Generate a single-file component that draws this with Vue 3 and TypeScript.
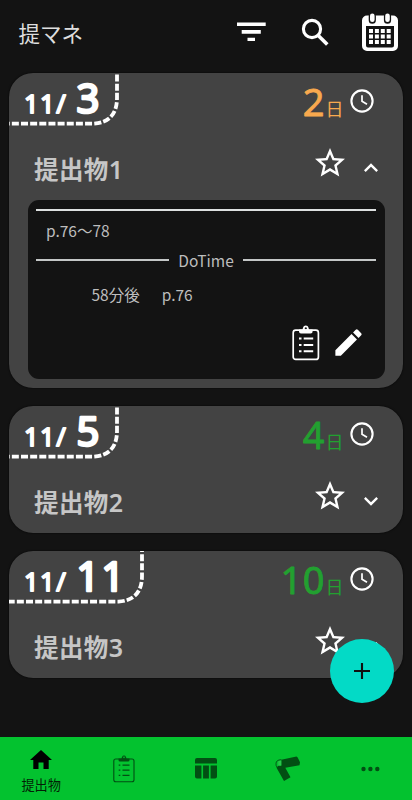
<script setup lang="ts">
interface Task {
  id: number
  month: string
  day: string
  title: string
  left: string
  urgent: boolean
  open: boolean
}

const tasks: Task[] = [
  { id: 1, month: '11/', day: '3', title: '提出物', left: '2', urgent: true, open: true },
  { id: 2, month: '11/', day: '5', title: '提出物', left: '4', urgent: false, open: false },
  { id: 3, month: '11/', day: '11', title: '提出物', left: '10', urgent: false, open: false },
]
</script>

<template>
  <div class="screen">
    <header class="bar">
      <h1>提マネ</h1>
      <svg class="filter" viewBox="0 0 29 20"><path d="M0 .6h28.7v3.500H0zM4.700 8.100h19.100v3.600H4.700zM10.500 15.800H18v3.300h-7.500z" /></svg>
      <svg class="search" viewBox="0 0 28 28">
        <circle cx="11" cy="11" r="8.600" fill="none" stroke="#fff" stroke-width="3.100" />
        <path d="M17 17.300L26.300 26.500" stroke="#fff" stroke-width="3.600" />
      </svg>
      <svg class="calendar" viewBox="0 0 36 38">
        <path fill-rule="evenodd" d="M5 2.500h26a5 5 0 0 1 5 5V33a5 5 0 0 1-5 5H5a5 5 0 0 1-5-5V7.500a5 5 0 0 1 5-5zM4 13v19.500a2 2 0 0 0 2 2h24a2 2 0 0 0 2-2V13z" />
        <path d="M10.300 3.200v4M25.500 3.200v4" stroke="#131313" stroke-width="7.200" stroke-linecap="round" />
        <path d="M10.300 2.800v4M25.500 2.800v4" stroke="#fff" stroke-width="4.600" stroke-linecap="round" />
        <path d="M7 16h4v4H7zM12.900 16h4v4h-4zM18.800 16h4v4h-4zM24.700 16h4v4h-4zM7 21.500h4v4H7zM12.900 21.500h4v4h-4zM18.800 21.500h4v4h-4zM24.700 21.500h4v4h-4zM7 27h4v4H7zM12.900 27h4v4h-4zM18.800 27h4v4h-4zM24.700 27h4v4h-4z" />
      </svg>
    </header>

    <main class="list">
      <article v-for="t in tasks" :key="t.id" class="card" :class="{ opened: t.open }">
        <div class="top">
          <svg class="date" viewBox="0 0 140 54">
            <path v-if="t.day.length > 1" d="M0 50.700H109.500Q133 49 133 25V0" stroke-dashoffset="1.300" />
            <path v-else d="M0 50.700H84.500Q108 49 108 25V0" stroke-dashoffset="6.300" />
            <text class="month" x="15" y="40">{{ t.month }}</text>
            <text class="day" x="67.500" y="40">{{ t.day }}</text>
          </svg>
          <div class="left" :class="{ urgent: t.urgent }">
            <svg class="num" viewBox="0 0 60 54"><text x="59.300" y="42.600" text-anchor="end">{{ t.left }}</text></svg>
            <span class="unit">日</span>
            <svg class="clock" viewBox="0 0 24 24">
              <circle cx="12" cy="12" r="10.600" fill="none" stroke="#fff" stroke-width="2.100" />
              <path d="M12 6.300v6l5 3" fill="none" stroke="#fff" stroke-width="1.700" />
            </svg>
          </div>
        </div>
        <div class="name">
          <h2>{{ t.title }}<b>{{ t.id }}</b></h2>
          <svg class="star" viewBox="0 0 24 24"><path d="M22 9.240l-7.190-.62L12 2 9.190 8.630 2 9.240l5.460 4.730L5.820 21 12 17.270 18.180 21l-1.630-7.030L22 9.240zM12 15.400l-3.760 2.270 1-4.280-3.320-2.880 4.380-.38L12 6.100l1.710 4.040 4.380.38-3.320 2.880 1 4.280L12 15.400z" /></svg>
          <svg class="chev" :class="{ up: t.open }" viewBox="0 0 24 24"><path d="M16.590 8.590L12 13.170 7.410 8.590 6 10l6 6 6-6z" /></svg>
        </div>
        <section v-if="t.open" class="panel">
          <hr />
          <p class="pages">p.76〜78</p>
          <div class="divider"><i></i><span>DoTime</span><i></i></div>
          <p class="when"><span>58分後</span><span>p.76</span></p>
          <div class="tools">
            <svg class="clip" viewBox="0 0 28 36">
              <rect x="1.200" y="5.200" width="25.200" height="29.200" rx="2.500" fill="none" stroke="#fff" stroke-width="1.700" />
              <path fill-rule="evenodd" d="M7 4.500h3.500c.5-1 .5-4 3.300-4s2.800 3 3.300 4h3.500v2q0 2-2 2H9q-2 0-2-2zM13.800 2.200a1.100 1.100 0 1 0 .01 0z" />
              <path d="M7 13.500h2.500M7 20h2.500M7 26.200h2.500M11.700 13.500h9.500M11.700 20h9.500M11.700 26.200h9.500" stroke="#fff" stroke-width="1.900" />
            </svg>
            <svg class="pen" viewBox="0 0 24 24"><path d="M3 17.250V21h3.750L17.810 9.940l-3.750-3.750L3 17.250zM20.710 7.040a1 1 0 0 0 0-1.410l-2.340-2.340a1 1 0 0 0-1.410 0l-1.830 1.830 3.750 3.750 1.830-1.830z" /></svg>
          </div>
        </section>
      </article>
    </main>

    <button class="fab" aria-label="追加">
      <svg viewBox="0 0 16 16"><path d="M8 0v16M0 8h16" stroke="#101010" stroke-width="2.100" /></svg>
    </button>

    <nav class="tabs">
      <a class="tab active">
        <svg class="home" viewBox="0 0 22 19"><path d="M11 0L0 10h3.300v9h5.200v-6.600h5V19h5.200v-9H22z" /></svg>
        <span>提出物</span>
      </a>
      <a class="tab">
        <svg class="clip-small" viewBox="0 0 22 28">
          <rect x=".8" y="4" width="20.200" height="22.700" rx="2" fill="none" stroke="#024f13" stroke-width="1.100" />
          <path fill-rule="evenodd" d="M5.500 3.500h3C9 2.500 9 .5 11 .5s2 2 2.500 3h3v1.500q0 1.500-1.500 1.500H7q-1.500 0-1.500-1.500zM11 1.600a.8.800 0 1 0 .01 0z" />
          <path d="M5.700 10.200h1.600M5.700 15.200h1.600M5.700 20.300h1.600M9.500 10.200h7M9.500 15.200h7M9.500 20.300h7" stroke="#024f13" stroke-width="1.300" />
        </svg>
      </a>
      <a class="tab">
        <svg class="table" viewBox="0 0 22 21"><path d="M2 0h18q2 0 2 2v3.500H0V2q0-2 2-2zM0 7.400h6.400v13.200H2q-2 0-2-2zM8.100 7.400h5.800v13.200H8.100zM15.600 7.400H22v11.200q0 2-2 2h-4.400z" /></svg>
      </a>
      <a class="tab">
        <svg class="device" viewBox="0 0 26 26">
          <path d="M6.300 3.700L21.500 .5 22.700 1.500 25 6.200 24.500 9.300 10.300 11.700 15.500 21.300 9 25 1.400 11.500 3.500 9.800 6.300 10z" />
          <path d="M6.300 3.700Q1 3.800 1 7.800T3.500 11.500" fill="none" stroke="#024f13" stroke-width=".9" />
          <path d="M3.300 5.200L6.300 4.500v4.700l-3 .3z" fill="#2cc54b" />
        </svg>
      </a>
      <a class="tab">
        <svg class="dots" viewBox="0 0 19 6"><circle cx="2.500" cy="3" r="2.200" /><circle cx="9.400" cy="3" r="2.200" /><circle cx="16.300" cy="3" r="2.200" /></svg>
      </a>
    </nav>
  </div>
</template>

<style>
body { background: #131313; }
</style>

<style scoped>
* { box-sizing: border-box; }
svg { display: block; flex: none; fill: #fff; overflow: visible; }
h1, h2, p, hr { margin: 0; }
.screen {
  position: relative;
  width: 412px;
  height: 800px;
  overflow: hidden;
  display: flex;
  flex-direction: column;
  background: #131313;
  color: #fff;
  font-family: "Noto Sans CJK JP", sans-serif;
}
.bar { height: 73px; flex: none; display: flex; align-items: flex-start; padding: 13px 14px 0 18.500px; }
h1 { flex: 1; font-size: 21.500px; font-weight: 400; line-height: 39px; color: #dedede; }
.filter { width: 29px; height: 20px; margin: 9px 35px 0 0; }
.search { width: 28px; height: 28px; margin: 4.500px 33px 0 0; }
.calendar { width: 36px; height: 38px; }
.list { flex: 1; min-height: 0; display: flex; flex-direction: column; gap: 18px; padding: 0 9px; }
.card { flex: none; border-radius: 24px; background: #434343; box-shadow: 0 0 2px #000; }
.card.opened { padding-bottom: 9.500px; }
.top { height: 54px; display: flex; justify-content: space-between; }
.date { width: 140px; height: 54px; }
.date path { fill: none; stroke: #fff; stroke-width: 3.800px; stroke-dasharray: 7 2.150; }
.date text { font-family: "Noto Sans", sans-serif; font-weight: 400; stroke: #fff; stroke-linejoin: round; }
.date .month { font-size: 25.500px; letter-spacing: 1.500px; stroke-width: 1.800px; }
.date .day { font-size: 40px; letter-spacing: 2.200px; stroke-width: 2.600px; }
.left { display: flex; align-items: flex-start; padding-right: 29px; color: #22a030; }
.left.urgent { color: #f8a94e; }
.num { width: 60px; height: 54px; fill: currentColor; stroke: currentColor; stroke-width: .8px; stroke-linejoin: round; font-family: "Noto Sans", sans-serif; font-size: 38px; letter-spacing: .7px; }
.unit { font-size: 18px; line-height: 26px; padding-top: 22px; margin-left: -.5px; }
.clock { width: 24px; height: 24px; margin: 16px 0 0 6.500px; }
.name { height: 73px; display: flex; align-items: flex-start; padding: 0 18px 0 25px; }
h2 { flex: 1; font-size: 24.500px; font-weight: 700; line-height: 36px; padding-top: 24px; color: #c6c6c6; letter-spacing: .4px; }
h2 b { font-family: "Noto Sans", sans-serif; font-weight: 600; font-size: 25px; line-height: 1; }
.star { width: 36px; height: 36px; margin: 18px 9.500px 0 0; }
.chev { width: 28px; height: 28px; margin-top: 27px; }
.chev.up { transform: rotate(180deg); }
.panel { width: 357px; height: 178.500px; margin-left: 18.500px; padding: 9px 8.500px; border-radius: 11px; background: #131313; display: flex; flex-direction: column; color: #bdbdbd; font-size: 15.500px; }
hr { width: 100%; height: 1.800px; border: 0; background: #dde0e0; }
.pages { line-height: 24px; padding: 7px 0 0 10px; }
.divider { display: flex; align-items: center; gap: 9px; height: 24px; margin-top: 6px; }
.divider i { flex: 1; height: 1.800px; background: #c4c7c7; }
.when { display: flex; gap: 22px; padding: 10px 0 0 55.500px; line-height: 24px; }
.tools { display: flex; justify-content: flex-end; gap: 11px; margin-top: 19px; padding-right: 10px; }
.clip { width: 28px; height: 36px; }
.pen { width: 35px; height: 35px; }
.fab { position: absolute; right: 18px; bottom: 97px; width: 64.500px; height: 64.500px; border: 0; border-radius: 50%; background: #03dac6; display: grid; place-items: center; }
.fab svg { width: 16px; height: 16px; }
.tabs { height: 63px; flex: none; display: flex; background: #03c22f; }
.tab { flex: 1; display: flex; flex-direction: column; align-items: center; justify-content: center; font-size: 13.200px; line-height: 20px; color: #031f06; }
.tab svg { fill: #024f13; }
.tab.active { justify-content: flex-start; padding-top: 13px; }
.tab .home { width: 22px; height: 19px; fill: #000; }
.tab.active span { margin-top: 6px; }
.clip-small { width: 22px; height: 28px; }
.table { width: 22px; height: 21px; }
.device { width: 26px; height: 26px; }
.dots { width: 19px; height: 6px; }
</style>
